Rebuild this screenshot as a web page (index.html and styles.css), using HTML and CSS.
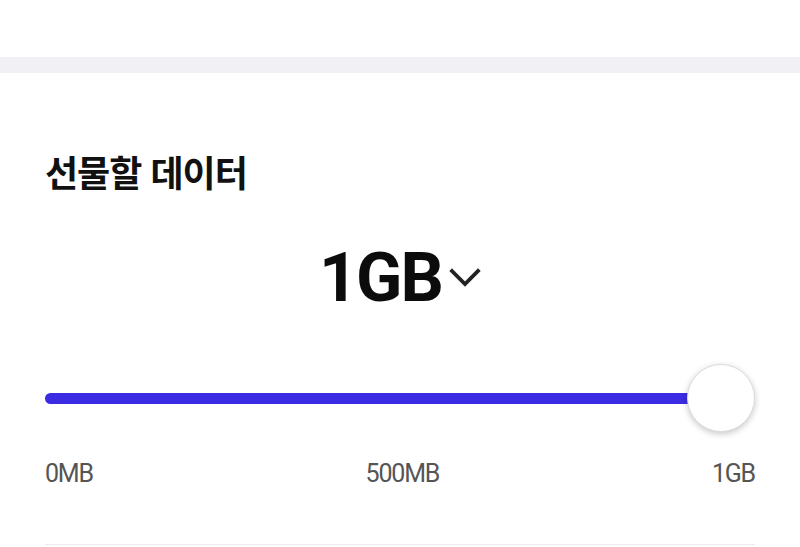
FILE: index.html
```html
<!DOCTYPE html>
<html lang="ko">
<head>
    <meta charset="UTF-8">
    <meta name="viewport" content="width=device-width, initial-scale=1.0">
    <title>데이터 선물하기</title>
    <link rel="stylesheet" href="styles.css">
</head>
<body>
    <div class="page">
        <div class="top-bar"></div>
        <div class="band"></div>

        <!-- 선물할 데이터 -->
        <section class="gift-section">
            <h2 class="section-title">선물할 데이터</h2>

            <div class="amount">
                <span class="amount-value">1GB</span>
                <svg class="amount-arrow" viewBox="0 0 32 20" fill="none" stroke="currentColor" stroke-width="3.8" stroke-linecap="square">
                    <path d="M3 3l13 13L29 3"/>
                </svg>
            </div>

            <div class="slider">
                <div class="slider-track"></div>
                <div class="slider-thumb"></div>
            </div>

            <div class="slider-labels">
                <span>0MB</span>
                <span>500MB</span>
                <span>1GB</span>
            </div>

            <div class="section-line"></div>
        </section>
    </div>
</body>
</html>
```

FILE: styles.css
```css
* {
    margin: 0;
    padding: 0;
    box-sizing: border-box;
}

body {
    font-family: Roboto, "Noto Sans CJK KR", sans-serif;
    background: #fff;
    color: #111;
}

.page {
    width: 800px;
    height: 547px;
    overflow: hidden;
}

.top-bar {
    height: 57px;
    background: #fff;
}

.band {
    height: 16px;
    background: #f1f0f5;
}

/* Section */
.gift-section {
    padding: 77px 45px 0;
}

.section-title {
    font-family: "Noto Sans CJK KR", sans-serif;
    font-size: 36px;
    font-weight: 700;
    line-height: 43px;
    letter-spacing: -1px;
    color: #111;
}

.amount {
    display: flex;
    align-items: center;
    justify-content: center;
    margin-top: 51px;
    height: 68px;
}

.amount-value {
    font-size: 68px;
    font-weight: 700;
    line-height: 1;
    letter-spacing: -2px;
    color: #0c0c0c;
}

.amount-arrow {
    width: 32px;
    height: 20px;
    margin-left: 7px;
    color: #222;
}

/* Slider */
.slider {
    display: flex;
    align-items: center;
    height: 68px;
    margin-top: 52px;
}

.slider-track {
    flex: 1;
    height: 11px;
    margin-right: -34px;
    background: #3b2be2;
    border-radius: 6px;
}

.slider-thumb {
    width: 68px;
    height: 68px;
    border-radius: 50%;
    background: #fff;
    border: 1px solid #dcdcdc;
    box-shadow: 0 2px 6px rgba(0,0,0,0.22);
    position: relative;
}

.slider-labels {
    display: flex;
    justify-content: space-between;
    margin-top: 27px;
    font-size: 25px;
    line-height: 30px;
    letter-spacing: -1.2px;
    color: #555;
}

.section-line {
    height: 1px;
    margin-top: 55px;
    background: #ececec;
}
```
